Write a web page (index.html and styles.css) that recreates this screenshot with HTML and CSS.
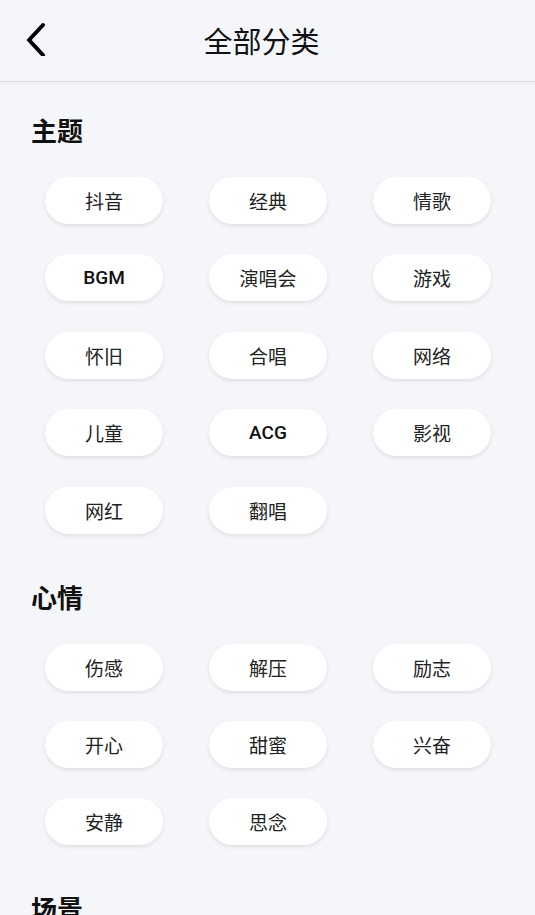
FILE: index.html
```html
<!DOCTYPE html>
<html>
	<head>
		<meta charset="UTF-8">
		<title>全部分类</title>
		<link rel="stylesheet" href="styles.css">
	</head>
	<body>
		<div class="header">
			<a class="back" href="#">
				<svg width="24" height="36" viewBox="0 0 24 36">
					<path d="M19 5 L5 20 L19 35" fill="none" stroke="#000" stroke-width="4" stroke-linecap="round" stroke-linejoin="round"/>
				</svg>
			</a>
			<h1>全部分类</h1>
		</div>
		<div class="section">
			<h2>主题</h2>
			<ul class="chips">
				<li>抖音</li>
				<li>经典</li>
				<li>情歌</li>
				<li class="en">BGM</li>
				<li>演唱会</li>
				<li>游戏</li>
				<li>怀旧</li>
				<li>合唱</li>
				<li>网络</li>
				<li>儿童</li>
				<li class="en">ACG</li>
				<li>影视</li>
				<li>网红</li>
				<li>翻唱</li>
			</ul>
		</div>
		<div class="section">
			<h2>心情</h2>
			<ul class="chips">
				<li>伤感</li>
				<li>解压</li>
				<li>励志</li>
				<li>开心</li>
				<li>甜蜜</li>
				<li>兴奋</li>
				<li>安静</li>
				<li>思念</li>
			</ul>
		</div>
		<div class="section">
			<h2>场景</h2>
		</div>
	</body>
</html>
```

FILE: styles.css
```css
*{
	margin: 0;
	padding: 0;
}
body{
	background: #f5f6fa;
	font-family: "Noto Sans CJK SC", "Liberation Sans", sans-serif;
	color: #111;
}
.header{
	height: 81px;
	border-bottom: 1px solid #dcdde2;
	box-shadow: 0 1px 4px rgba(0,0,0,0.06);
	position: relative;
	display: flex;
	align-items: center;
	justify-content: center;
}
.header h1{
	font-size: 29px;
	font-weight: normal;
	line-height: 36px;
	margin-top: -2px;
	margin-right: 12px;
}
.back{
	position: absolute;
	left: 24px;
	top: 20px;
	display: block;
	width: 24px;
	height: 36px;
}
.section{
	padding: 30px 0 15px;
}
.section h2{
	font-size: 26px;
	line-height: 36px;
	font-weight: bold;
	padding-left: 31px;
	margin-bottom: 29px;
}
.chips{
	list-style: none;
	display: grid;
	grid-template-columns: repeat(3, 118px);
	column-gap: 46px;
	row-gap: 30.4px;
	padding: 0 45px;
}
.chips li{
	height: 47px;
	border-radius: 24px;
	background: #fff;
	box-shadow: 0 2px 4px rgba(0,0,0,0.09);
	display: flex;
	align-items: center;
	justify-content: center;
	font-size: 19px;
	color: #222;
}
.chips li.en{
	font-family: Roboto, "Noto Sans CJK SC", sans-serif;
	font-weight: 500;
	color: #111;
}
```
